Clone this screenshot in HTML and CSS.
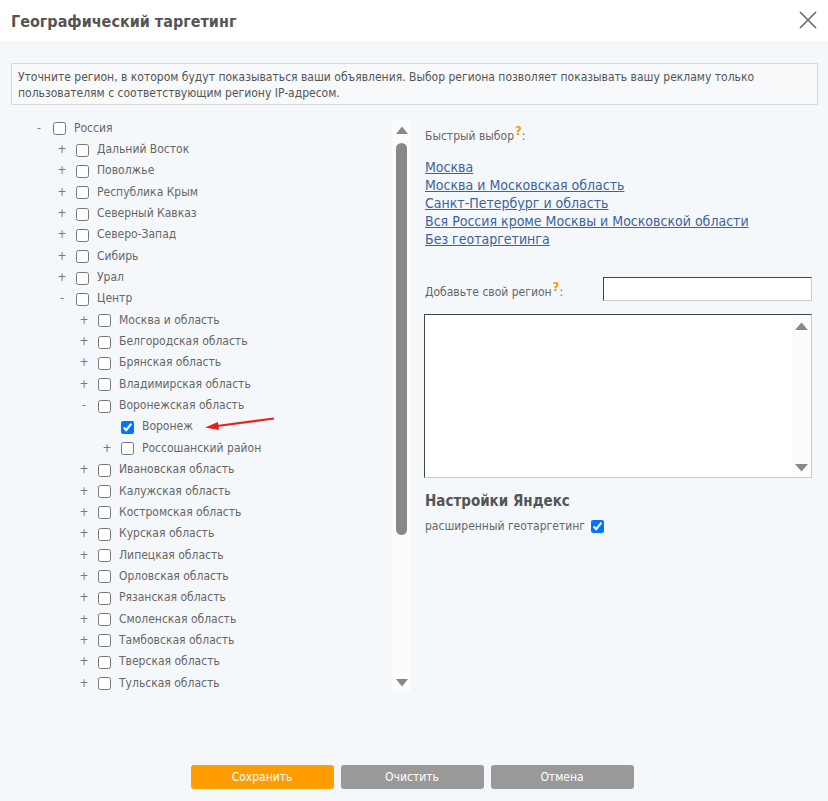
FILE: index.html
```html
<!DOCTYPE html>
<html lang="ru">
<head>
<meta charset="utf-8">
<title>Географический таргетинг</title>
<link rel="stylesheet" href="styles.css">
</head>
<body>
<div class="dialog">
  <div class="header">
    <h1 class="title">Географический таргетинг</h1>
    <span class="close" aria-label="Закрыть">
      <svg width="20" height="20" viewBox="0 0 20 20"><path d="M2 2 L18 18 M18 2 L2 18" stroke="#666" stroke-width="1.6" fill="none"/></svg>
    </span>
  </div>
  <div class="content">
    <div class="info">Уточните регион, в котором будут показываться ваши объявления. Выбор региона позволяет показывать вашу рекламу только пользователям с соответствующим региону IP-адресом.</div>
    <div class="cols">
      <div class="tree-wrap">
        <div class="tree">
          <div class="row l0"><span class="tg">-</span><input type="checkbox"><span class="lbl">Россия</span></div>
          <div class="row l1"><span class="tg">+</span><input type="checkbox"><span class="lbl">Дальний Восток</span></div>
          <div class="row l1"><span class="tg">+</span><input type="checkbox"><span class="lbl">Поволжье</span></div>
          <div class="row l1"><span class="tg">+</span><input type="checkbox"><span class="lbl">Республика Крым</span></div>
          <div class="row l1"><span class="tg">+</span><input type="checkbox"><span class="lbl">Северный Кавказ</span></div>
          <div class="row l1"><span class="tg">+</span><input type="checkbox"><span class="lbl">Северо-Запад</span></div>
          <div class="row l1"><span class="tg">+</span><input type="checkbox"><span class="lbl">Сибирь</span></div>
          <div class="row l1"><span class="tg">+</span><input type="checkbox"><span class="lbl">Урал</span></div>
          <div class="row l1"><span class="tg">-</span><input type="checkbox"><span class="lbl">Центр</span></div>
          <div class="row l2"><span class="tg">+</span><input type="checkbox"><span class="lbl">Москва и область</span></div>
          <div class="row l2"><span class="tg">+</span><input type="checkbox"><span class="lbl">Белгородская область</span></div>
          <div class="row l2"><span class="tg">+</span><input type="checkbox"><span class="lbl">Брянская область</span></div>
          <div class="row l2"><span class="tg">+</span><input type="checkbox"><span class="lbl">Владимирская область</span></div>
          <div class="row l2"><span class="tg">-</span><input type="checkbox"><span class="lbl">Воронежская область</span></div>
          <div class="row l3"><span class="tg"></span><input type="checkbox" checked><span class="lbl">Воронеж</span>
            <svg class="arrow" width="72" height="14" viewBox="0 0 72 14"><path d="M71 1.5 L14 9" stroke="#e8201c" stroke-width="2" fill="none"/><path d="M2 10.5 L15 5 L16 13 Z" fill="#e8201c"/></svg>
          </div>
          <div class="row l3"><span class="tg">+</span><input type="checkbox"><span class="lbl">Россошанский район</span></div>
          <div class="row l2"><span class="tg">+</span><input type="checkbox"><span class="lbl">Ивановская область</span></div>
          <div class="row l2"><span class="tg">+</span><input type="checkbox"><span class="lbl">Калужская область</span></div>
          <div class="row l2"><span class="tg">+</span><input type="checkbox"><span class="lbl">Костромская область</span></div>
          <div class="row l2"><span class="tg">+</span><input type="checkbox"><span class="lbl">Курская область</span></div>
          <div class="row l2"><span class="tg">+</span><input type="checkbox"><span class="lbl">Липецкая область</span></div>
          <div class="row l2"><span class="tg">+</span><input type="checkbox"><span class="lbl">Орловская область</span></div>
          <div class="row l2"><span class="tg">+</span><input type="checkbox"><span class="lbl">Рязанская область</span></div>
          <div class="row l2"><span class="tg">+</span><input type="checkbox"><span class="lbl">Смоленская область</span></div>
          <div class="row l2"><span class="tg">+</span><input type="checkbox"><span class="lbl">Тамбовская область</span></div>
          <div class="row l2"><span class="tg">+</span><input type="checkbox"><span class="lbl">Тверская область</span></div>
          <div class="row l2"><span class="tg">+</span><input type="checkbox"><span class="lbl">Тульская область</span></div>
        </div>
        <div class="vscroll">
          <svg class="sa up" width="12" height="8" viewBox="0 0 12 8"><path d="M0 8 L6 0.5 L12 8 Z" fill="#888"/></svg>
          <div class="thumb"></div>
          <div class="spacer"></div>
          <svg class="sa" width="12" height="8" viewBox="0 0 12 8"><path d="M0 0 L6 7.5 L12 0 Z" fill="#888"/></svg>
        </div>
      </div>
      <div class="side">
        <div class="quick-label">Быстрый выбор<span class="q">?</span>:</div>
        <div class="links">
          <a href="#">Москва</a>
          <a href="#">Москва и Московская область</a>
          <a href="#">Санкт-Петербург и область</a>
          <a href="#">Вся Россия кроме Москвы и Московской области</a>
          <a href="#">Без геотаргетинга</a>
        </div>
        <div class="add-row">
          <span class="add-label">Добавьте свой регион<span class="q">?</span>:</span>
          <span class="field"></span>
        </div>
        <div class="listbox">
          <div class="lb-body"></div>
          <div class="lb-scroll">
            <svg width="13" height="8" viewBox="0 0 13 8"><path d="M0 8 L6.5 0.5 L13 8 Z" fill="#888"/></svg>
            <svg width="13" height="8" viewBox="0 0 13 8"><path d="M0 0 L6.5 7.5 L13 0 Z" fill="#888"/></svg>
          </div>
        </div>
        <div class="ya-title">Настройки Яндекс</div>
        <div class="ya-row"><span>расширенный геотаргетинг</span><input type="checkbox" checked></div>
      </div>
    </div>
    <div class="buttons">
      <span class="btn save">Сохранить</span>
      <span class="btn gray">Очистить</span>
      <span class="btn gray">Отмена</span>
    </div>
  </div>
</div>
</body>
</html>
```
FILE: styles.css
```css
* { box-sizing: border-box; }
html, body { margin: 0; padding: 0; }
body {
  width: 828px;
  height: 801px;
  overflow: hidden;
  background: #f5f8fa;
  font-family: "DejaVu Sans Condensed", "DejaVu Sans", sans-serif;
  color: #666;
}
.dialog { display: flex; flex-direction: column; height: 801px; }
.header {
  height: 41px;
  background: #fff;
  display: flex;
  align-items: center;
  justify-content: space-between;
  padding: 0 10px 0 11px;
}
.title {
  margin: 0;
  font-size: 16px;
  font-weight: bold;
  color: #555;
  padding-top: 2px;
}
.close { display: flex; margin-top: -2px; }
.content {
  flex: 1;
  display: flex;
  flex-direction: column;
  padding: 22px 10px 0 11px;
}
.info {
  border: 1px solid #dadada;
  background: #f7f9fa;
  font-size: 12px;
  line-height: 16px;
  color: #555;
  padding: 5px 6px 3px 6px;
  height: 42px;
}
.cols {
  display: flex;
  margin-top: 12px;
  height: 578px;
}
.tree-wrap {
  display: flex;
  width: 391px;
  margin-left: 9px;
}
.tree {
  flex: 1;
}
.row {
  height: 21.35px;
  display: flex;
  align-items: center;
  font-size: 12px;
  color: #666;
  white-space: nowrap;
}
.row.l0 { padding-left: 9px; }
.row.l1 { padding-left: 32px; }
.row.l2 { padding-left: 54px; }
.row.l3 { padding-left: 77px; }
.tg {
  width: 20px;
  text-align: center;
  color: #777;
  font-size: 12px;
}
.row input, .ya-row input {
  margin: 0 0 0 4px;
  width: 13px;
  height: 13px;
  flex: none;
}
.row input { position: relative; top: 1px; }
.lbl { margin-left: 8px; }
.arrow { margin-left: 10px; margin-top: -4px; }
.vscroll {
  width: 19px;
  background: #fdfcfc;
  display: flex;
  flex-direction: column;
  align-items: center;
  margin-top: 3px;
  height: 572px;
  padding: 6px 0 5px;
}
.thumb {
  width: 11px;
  height: 392px;
  border-radius: 6px;
  background: #888;
  margin-top: 9px;
}
.spacer { flex: 1; }
.side {
  margin-left: 14px;
  width: 387px;
  display: flex;
  flex-direction: column;
  padding-top: 3px;
}
.quick-label {
  font-size: 12px;
  line-height: 16px;
  margin-top: 8px;
  color: #666;
}
.q {
  color: #f90;
  font-weight: bold;
  font-size: 13px;
  position: relative;
  top: -5px;
  margin-left: 1px;
}
.links {
  display: flex;
  flex-direction: column;
  margin-top: 14px;
}
.links a {
  font-size: 14px;
  line-height: 18px;
  color: #3d62a0;
  text-decoration: underline;
  width: fit-content;
}
.add-row {
  display: flex;
  align-items: center;
  justify-content: space-between;
  margin-top: 29px;
}
.add-label { font-size: 12px; margin-top: 5px; }
.field {
  width: 209px;
  height: 24px;
  background: #fff;
  border: 1px solid;
  border-color: #444 #ccc #ccc #444;
}
.listbox {
  margin-top: 13px;
  height: 164px;
  display: flex;
  background: #fff;
  border: 1px solid;
  border-color: #444 #ccc #ccc #444;
  margin-left: -1px;
}
.lb-body { flex: 1; }
.lb-scroll {
  width: 19px;
  background: #fbfbfb;
  display: flex;
  flex-direction: column;
  align-items: center;
  justify-content: space-between;
  padding: 7px 0 5px;
}
.ya-title {
  font-size: 15px;
  font-weight: bold;
  color: #555;
  margin-top: 14px;
}
.ya-row {
  display: flex;
  align-items: center;
  font-size: 12px;
  margin-top: 9px;
  color: #666;
}
.ya-row input { margin-left: 6px; }
.buttons {
  display: flex;
  justify-content: center;
  gap: 7px;
  margin-top: 70px;
  padding-right: 5px;
}
.btn {
  width: 143px;
  height: 24px;
  border-radius: 3px;
  color: #fff;
  font-size: 12px;
  display: flex;
  align-items: center;
  justify-content: center;
}
.save { background: #ff9c00; }
.gray { background: #999; }
```
